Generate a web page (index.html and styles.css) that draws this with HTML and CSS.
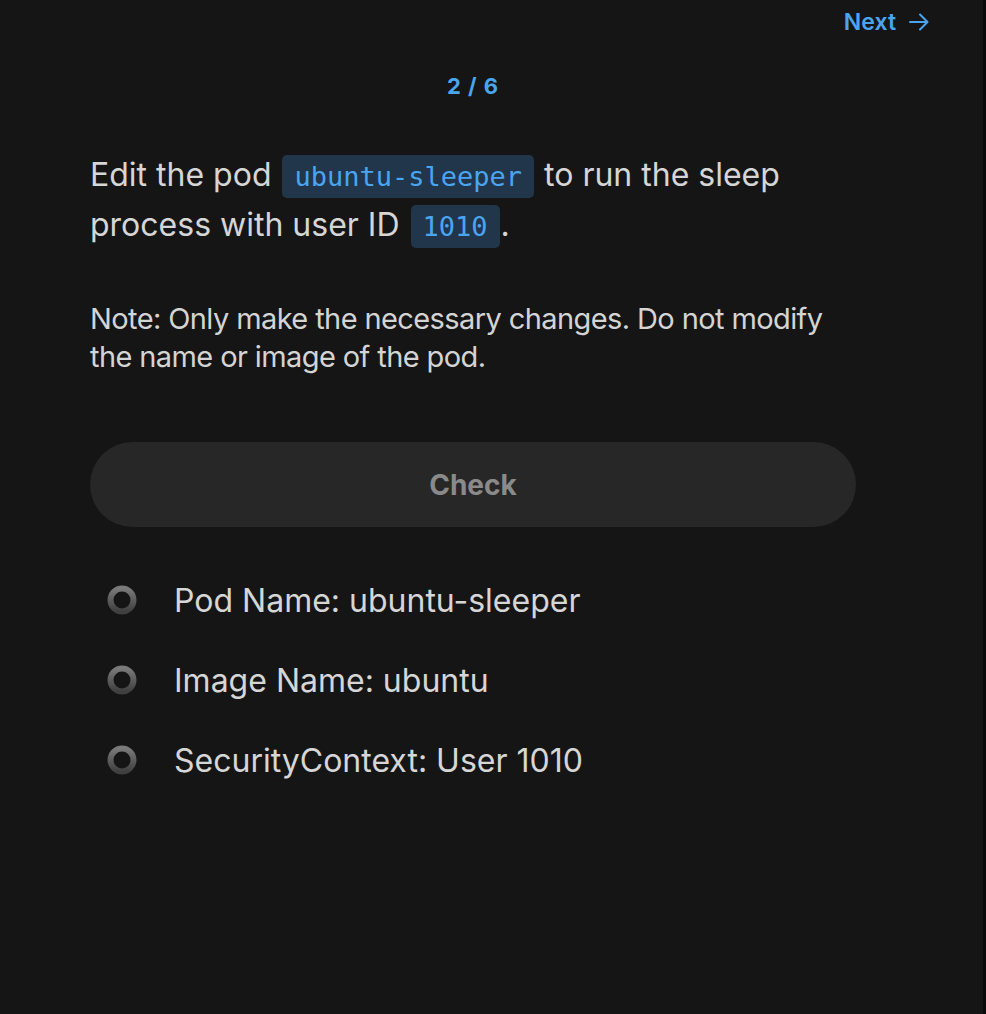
FILE: index.html
```html
<!DOCTYPE html>
<html lang="en">
<head>
<meta charset="utf-8">
<title>Task 2 / 6</title>
<link rel="stylesheet" href="styles.css">
</head>
<body>
<div class="page">
  <header class="topbar">
    <a class="next" href="#">Next
      <svg class="next-icon" width="24" height="24" viewBox="0 0 24 24" fill="none" stroke="currentColor" stroke-width="2" stroke-linecap="round" stroke-linejoin="round"><path d="M3 12h17"/><path d="M13 4.5l7.5 7.5-7.5 7.5"/></svg>
    </a>
  </header>
  <main class="content">
    <div class="counter">2 / 6</div>
    <p class="question">Edit the pod <code class="code">ubuntu-sleeper</code> to run the sleep process with user ID <code class="code">1010</code>.</p>
    <p class="note">Note: Only make the necessary changes. Do not modify the name or image of the pod.</p>
    <button class="check" type="button">Check</button>
    <ul class="checklist">
      <li class="item"><svg class="ring" width="30" height="30" viewBox="0 0 30 30"><defs><linearGradient id="g1" x1="0" y1="0" x2="0" y2="1"><stop offset="0" stop-color="#7a7a7a"/><stop offset="1" stop-color="#3f3f3f"/></linearGradient></defs><circle cx="15" cy="15" r="11.5" fill="none" stroke="url(#g1)" stroke-width="6"/></svg><span>Pod Name: ubuntu-sleeper</span></li>
      <li class="item"><svg class="ring" width="30" height="30" viewBox="0 0 30 30"><circle cx="15" cy="15" r="11.5" fill="none" stroke="url(#g1)" stroke-width="6"/></svg><span>Image Name: ubuntu</span></li>
      <li class="item"><svg class="ring" width="30" height="30" viewBox="0 0 30 30"><circle cx="15" cy="15" r="11.5" fill="none" stroke="url(#g1)" stroke-width="6"/></svg><span>SecurityContext: User 1010</span></li>
    </ul>
  </main>
</div>
</body>
</html>
```
FILE: styles.css
```css
* { box-sizing: border-box; }
html, body { margin: 0; padding: 0; height: 100%; }
body {
  background: #0a0a0a;
  font-family: Inter, "Noto Sans", sans-serif;
  color: #d4d4d4;
}
.page {
  width: 983px;
  min-height: 1014px;
  background: #151515;
}
.topbar {
  display: flex;
  justify-content: flex-end;
  padding: 4px 52px 0 0;
  height: 40px;
}
.next {
  display: flex;
  align-items: center;
  gap: 11px;
  color: #4aa5f0;
  text-decoration: none;
  font-weight: 600;
  font-size: 23px;
  line-height: 34px;
}
.next-icon { display: block; }
.content {
  width: 766px;
  margin-left: 90px;
}
.counter {
  text-align: center;
  color: #4aa5f0;
  font-weight: 700;
  font-size: 22px;
  letter-spacing: 1px;
  margin-top: 33px;
  line-height: 26px;
}
.question {
  margin: 51px 0 0;
  font-size: 32px;
  line-height: 50px;
  color: #d6d6d6;
}
.code {
  font-family: "DejaVu Sans Mono", monospace;
  font-size: 27px;
  line-height: 1;
  color: #4aa5f0;
  background: #21364a;
  border-radius: 5px;
  padding: 6px 12px;
  margin: 0 1px 0 2px;
}
.note {
  margin: 50px 0 0;
  font-size: 29px;
  letter-spacing: -0.6px;
  line-height: 38px;
  color: #d4d4d4;
}
.check {
  display: block;
  width: 766px;
  height: 85px;
  margin-top: 66px;
  border: none;
  border-radius: 43px;
  background: #272727;
  color: #8a8a8a;
  font-family: Inter, sans-serif;
  font-weight: 700;
  font-size: 28px;
}
.checklist {
  list-style: none;
  margin: 33px 0 0;
  padding: 0;
}
.item {
  display: flex;
  align-items: center;
  height: 80px;
  padding-left: 17px;
  gap: 37px;
  font-size: 32px;
  color: #d6d6d6;
}
.ring { display: block; flex: none; }
```
